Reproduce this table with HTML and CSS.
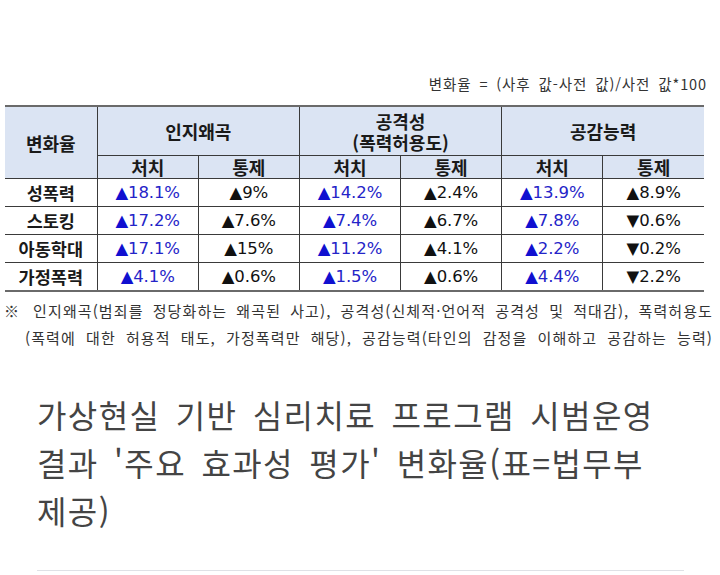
FILE: index.html
```html
<!DOCTYPE html>
<html lang="ko">
<head>
<meta charset="utf-8">
<link rel="stylesheet" href="styles.css">
</head>
<body>
<div class="figure">
  <div class="formula">변화율 = (사후 값-사전 값)/사전 값*100</div>
  <table class="data">
    <colgroup>
      <col class="c-label"><col class="c-val"><col class="c-val"><col class="c-val"><col class="c-val"><col class="c-val"><col class="c-val">
    </colgroup>
    <thead>
      <tr class="h1">
        <th rowspan="2" class="first">변화율</th>
        <th colspan="2">인지왜곡</th>
        <th colspan="2" class="two"><span class="ln">공격성</span><span class="ln">(폭력허용도)</span></th>
        <th colspan="2">공감능력</th>
      </tr>
      <tr class="h2">
        <th>처치</th><th>통제</th><th>처치</th><th>통제</th><th>처치</th><th>통제</th>
      </tr>
    </thead>
    <tbody>
      <tr class="r1">
        <th class="first">성폭력</th>
        <td class="blue"><span class="tri">▲</span>18.1%</td>
        <td><span class="tri">▲</span>9%</td>
        <td class="blue"><span class="tri">▲</span>14.2%</td>
        <td><span class="tri">▲</span>2.4%</td>
        <td class="blue"><span class="tri">▲</span>13.9%</td>
        <td><span class="tri">▲</span>8.9%</td>
      </tr>
      <tr class="r2">
        <th class="first">스토킹</th>
        <td class="blue"><span class="tri">▲</span>17.2%</td>
        <td><span class="tri">▲</span>7.6%</td>
        <td class="blue"><span class="tri">▲</span>7.4%</td>
        <td><span class="tri">▲</span>6.7%</td>
        <td class="blue"><span class="tri">▲</span>7.8%</td>
        <td><span class="tri">▼</span>0.6%</td>
      </tr>
      <tr class="r1">
        <th class="first">아동학대</th>
        <td class="blue"><span class="tri">▲</span>17.1%</td>
        <td><span class="tri">▲</span>15%</td>
        <td class="blue"><span class="tri">▲</span>11.2%</td>
        <td><span class="tri">▲</span>4.1%</td>
        <td class="blue"><span class="tri">▲</span>2.2%</td>
        <td><span class="tri">▼</span>0.2%</td>
      </tr>
      <tr class="r2 last">
        <th class="first">가정폭력</th>
        <td class="blue"><span class="tri">▲</span>4.1%</td>
        <td><span class="tri">▲</span>0.6%</td>
        <td class="blue"><span class="tri">▲</span>1.5%</td>
        <td><span class="tri">▲</span>0.6%</td>
        <td class="blue"><span class="tri">▲</span>4.4%</td>
        <td><span class="tri">▼</span>2.2%</td>
      </tr>
    </tbody>
  </table>
  <div class="notes">
    <p class="note n1">※ 인지왜곡(범죄를 정당화하는 왜곡된 사고), 공격성(신체적·언어적 공격성 및 적대감), 폭력허용도</p>
    <p class="note n2">(폭력에 대한 허용적 태도, 가정폭력만 해당), 공감능력(타인의 감정을 이해하고 공감하는 능력)</p>
  </div>
</div>
<div class="caption">
  <p class="caption-text">가상현실 기반 심리치료 프로그램 시범운영 결과 '주요 효과성 평가' 변화율(표=법무부 제공)</p>
</div>
</body>
</html>
```

FILE: styles.css
```css
html, body {
  margin: 0;
  padding: 0;
  background: #ffffff;
}

body {
  width: 720px;
  height: 575px;
  overflow: hidden;
  font-family: "Noto Sans CJK KR", "Noto Sans", sans-serif;
  color: #222;
}

.figure {
  padding: 74px 16px 0 5px;
}

.formula {
  text-align: right;
  font-size: 14.5px;
  line-height: 20px;
  color: #333;
  margin-right: -3px;
  margin-bottom: 11px;
  letter-spacing: 0.9px;
  word-spacing: 3px;
}

.data {
  width: 699px;
  border-collapse: collapse;
  table-layout: fixed;
  border-top: 2px solid #6a6a6a;
  border-bottom: 2px solid #6a6a6a;
}

.c-label { width: 92px; }
.c-val { width: 101px; }

.data th,
.data td {
  border: 1px solid #3a3a3a;
  padding: 0;
  text-align: center;
  vertical-align: middle;
  overflow: hidden;
  white-space: nowrap;
}

.data tr > :first-child { border-left: none; }
.data tr > :last-child { border-right: none; }

.data thead th {
  background: #dbe4f3;
  font-weight: 700;
  font-size: 18px;
  color: #1a1a1a;
}

.h1 th { height: 47px; line-height: 22px; }
.h1 .two { padding-top: 1px; }
.ln {
  display: block;
  height: 21px;
  line-height: 21px;
}
.h2 th { height: 22px; line-height: 22px; }

.data tbody .first {
  font-weight: 700;
  font-size: 17.5px;
  color: #1a1a1a;
  background: #ffffff;
}

.r1 th, .r1 td { height: 27px; }
.r2 th, .r2 td { height: 27px; }

.data td {
  font-family: "DejaVu Sans", "Noto Sans", sans-serif;
  font-size: 16.5px;
  color: #111;
  letter-spacing: -0.1px;
}

.data td.blue {
  color: #2424c8;
}

.tri {
  font-family: "DejaVu Sans", sans-serif;
  font-size: 16.5px;
}

.blue .tri { color: #1010d0; }

.notes {
  padding-top: 5px;
}

.note {
  margin: 0;
  font-size: 15px;
  line-height: 27px;
  color: #333;
  text-align: justify;
  text-align-last: justify;
  letter-spacing: 1.1px;
  word-spacing: 0;
}

.n1 { margin-left: -1px; width: 709px; }
.n2 { margin-left: 20px; width: 688px; }

.caption {
  margin: 39px 36px 0 37px;
  border-bottom: 1px solid #dfe1e6;
  padding-bottom: 36px;
}

.caption-text {
  margin: 0;
  font-size: 32px;
  line-height: 48px;
  color: #444;
  word-spacing: 5px;
  letter-spacing: 1.4px;
  word-break: keep-all;
  width: 670px;
}
```
